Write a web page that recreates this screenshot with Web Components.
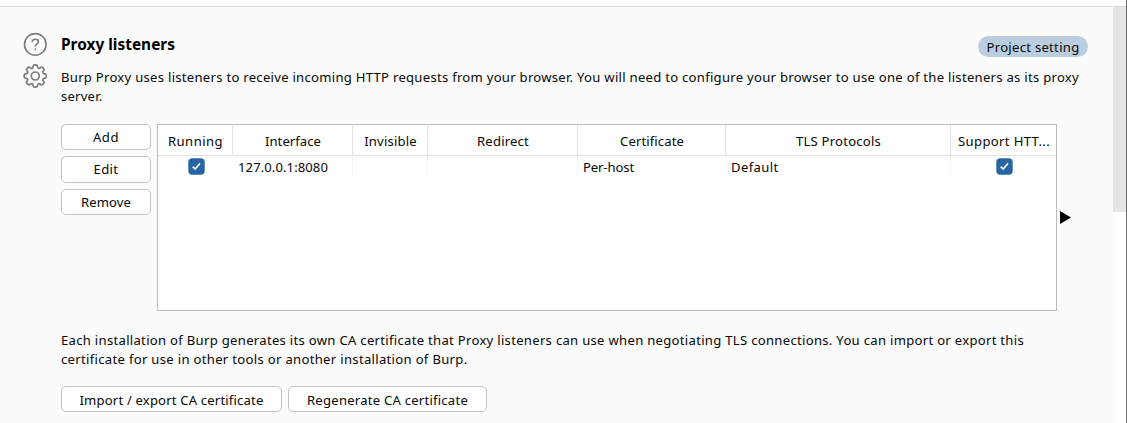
<!DOCTYPE html>
<html lang="en"><head><meta charset="utf-8"><title>Proxy listeners</title>
<style>html,body{margin:0;height:100%;overflow:hidden;background:#fbfbfb}body{font:450 13.1px/19px "Noto Sans","Open Sans",sans-serif;color:#080808}</style></head>
<body><proxy-settings></proxy-settings>
<script>
class TextLine extends HTMLElement{
  connectedCallback(){
    const root=this.attachShadow({mode:'open'});
    root.innerHTML='<style>:host{display:block;white-space:nowrap;flex:none;width:max-content}span{display:inline-block}</style><span><slot></slot></span>';
    const n=this.textContent.length,w=+this.getAttribute('w'),s=root.querySelector('span');
    if(w){const d=(w-s.getBoundingClientRect().width)/n;s.style.letterSpacing=d+'px';this.style.width=w+'px'}
  }
}
class PushButton extends HTMLElement{
  connectedCallback(){this.attachShadow({mode:'open'}).innerHTML='<style>:host{display:flex;box-sizing:border-box;height:26.4px;border:1.4px solid #c4c2c2;border-radius:5px;background:#fff;align-items:center;justify-content:center;flex:none;line-height:19px}</style><slot></slot>'}
}
class SettingBadge extends HTMLElement{
  connectedCallback(){this.attachShadow({mode:'open'}).innerHTML='<style>:host{display:flex;width:110px;height:21px;border-radius:11px;background:#bacee0;align-items:center;justify-content:center}slot{display:block;padding-top:1px}</style><slot></slot>'}
}
class CheckMark extends HTMLElement{
  connectedCallback(){this.attachShadow({mode:'open'}).innerHTML='<style>:host,svg{display:block;width:17px;height:17px}</style><svg viewBox="0 0 17 17"><rect x=".3" y=".3" width="16.4" height="16.4" rx="4" fill="#26659f"/><path d="M4.7 8.7 7.2 11 12 5.4" fill="none" stroke="#e4edf5" stroke-width="1.8"/></svg>'}
}
class HelpIcon extends HTMLElement{
  connectedCallback(){this.attachShadow({mode:'open'}).innerHTML='<style>:host,svg{display:block;width:24px;height:24px}</style><svg viewBox="0 0 24 24" fill="none" stroke="#7c7c7c" stroke-width="1.6"><circle cx="12.3" cy="12.4" r="10.8"/><path d="M9.2 9.9c0-1.7 1.3-2.7 3.1-2.7s3.1 1 3.1 2.6c0 2.2-3 2.2-3 4.7"/><path d="M11.6 17.3h1.5"/></svg>'}
}
class GearIcon extends HTMLElement{
  connectedCallback(){
    const p=[];
    for(let i=0;i<8;i++)for(const [a,r] of [[-15,8.4],[-11,11.4],[11,11.4],[15,8.4]]){const t=(i*45+a-90)*Math.PI/180;p.push([12.3+r*Math.cos(t),12+r*Math.sin(t)])}
    const mid=(a,b)=>((a[0]+b[0])/2).toFixed(2)+' '+((a[1]+b[1])/2).toFixed(2);
    let d='M'+mid(p[p.length-1],p[0]);
    p.forEach((v,i)=>{d+='Q'+v[0].toFixed(2)+' '+v[1].toFixed(2)+' '+mid(v,p[(i+1)%p.length])});
    this.attachShadow({mode:'open'}).innerHTML='<style>:host,svg{display:block;width:24px;height:24px}</style><svg viewBox="0 0 24 24" fill="none" stroke="#7c7c7c" stroke-width="1.7"><path d="'+d+'Z"/><circle cx="12.3" cy="12" r="4"/></svg>'}
}
class ListenerTable extends HTMLElement{
  connectedCallback(){
    const h=[['Running',55],['Interface',56],['Invisible',52.5],['Redirect',52],['Certificate',64],['TLS Protocols',85],['Support HTT...',92]];
    const c=['<check-mark></check-mark>','<text-line w="90">127.0.0.1:8080</text-line>','','','<text-line w="51">Per-host</text-line>','<text-line w="47.5">Default</text-line>','<check-mark></check-mark>'];
    this.attachShadow({mode:'open'}).innerHTML=`<style>
    :host{display:block;box-sizing:border-box;width:900px;height:187px;border:1.4px solid #bebcbc;background:#fff}
    .row{display:grid;grid-template-columns:75px 120px 75px 150px 148px 225px 105px}
    .row>div{box-sizing:border-box;border-right:1px solid #e2e2e2;display:flex;justify-content:center;align-items:center}
    .row>div:last-child{border-right:0}
    .head{height:31px;box-sizing:border-box;border-bottom:1px solid #e2e2e2}.head>div{padding:2px 0 0 1px}
    .data{height:20px}.data>div{border-color:#f6f6f6;justify-content:flex-start;align-items:flex-start;padding:2px 0 0 5px}
    .data>div:first-child{padding:2px 0 0 30px}.data>div:last-child{padding:2px 0 0 45px}
    .data>div:nth-child(1),.data>div:nth-child(5){border-color:transparent}
    </style><div class="row head">${h.map(x=>`<div><text-line w="${x[1]}">${x[0]}</text-line></div>`).join('')}</div><div class="row data">${c.map(x=>`<div>${x}</div>`).join('')}</div>`}
}
class ProxySettings extends HTMLElement{
  connectedCallback(){this.attachShadow({mode:'open'}).innerHTML=`<style>
  :host{display:grid;grid-template-columns:1113px 13px 1px;grid-template-rows:6px 1px 416px;height:423px}
  .top{grid-column:1/3;background:#fff}.rule{grid-column:1/3;background:#d9dbdb}
  .edge{grid-column:3;grid-row:1/4;background:#6d6d6d}
  .scroll{background:#fff;grid-column:2;grid-row:3}.thumb{height:205px;background:#e5e5e5}
  .panel{grid-column:1;grid-row:3;display:grid;grid-template-columns:24px 1fr;column-gap:14px;padding:25px 25px 0 23px}
  .icons{display:grid;align-content:start;row-gap:8px}
  .title{display:flex;justify-content:space-between;height:36px}
  h2{margin:3px 0 0;font-size:15.4px;line-height:20px;color:#000}
  setting-badge{margin-top:4px}
  .list{display:grid;grid-template-columns:90px 900px 11px;column-gap:6px;margin-top:18px}
  .buttons{display:flex;flex-direction:column;gap:6.1px}
  .arrow{align-self:center;width:11px;height:13px;margin-left:-3.4px}
  .arrow svg{display:block}
  .note{margin-top:20px}.actions{display:flex;gap:6px;margin-top:17px}
  .actions text-line{margin-top:2px}
  </style>
  <div class="top"></div><div class="rule"></div>
  <main class="panel"><div class="icons"><help-icon></help-icon><gear-icon></gear-icon></div>
  <section><div class="title"><h2><text-line w="114">Proxy listeners</text-line></h2><setting-badge><text-line w="93">Project setting</text-line></setting-badge></div>
  <div><text-line w="1018">Burp Proxy uses listeners to receive incoming HTTP requests from your browser. You will need to configure your browser to use one of the listeners as its proxy</text-line><text-line w="41.5">server.</text-line></div>
  <div class="list"><div class="buttons"><push-button><text-line w="26">Add</text-line></push-button><push-button><text-line w="25">Edit</text-line></push-button><push-button><text-line w="50">Remove</text-line></push-button></div>
  <listener-table></listener-table><div class="arrow"><svg width="11" height="13" viewBox="0 0 11 13"><path d="M0 0 11 6.5 0 13Z" fill="#000"/></svg></div></div>
  <div class="note"><text-line w="963">Each installation of Burp generates its own CA certificate that Proxy listeners can use when negotiating TLS connections. You can import or export this</text-line><text-line w="406.5">certificate for use in other tools or another installation of Burp.</text-line></div>
  <div class="actions"><push-button style="width:221px"><text-line w="184">Import / export CA certificate</text-line></push-button><push-button style="width:199px"><text-line w="161">Regenerate CA certificate</text-line></push-button></div>
  </section></main><div class="scroll"><div class="thumb"></div></div><div class="edge"></div>`}
}
for(const [n,c] of [['text-line',TextLine],['push-button',PushButton],['setting-badge',SettingBadge],['check-mark',CheckMark],['help-icon',HelpIcon],['gear-icon',GearIcon],['listener-table',ListenerTable],['proxy-settings',ProxySettings]])customElements.define(n,c);
</script></body></html>
